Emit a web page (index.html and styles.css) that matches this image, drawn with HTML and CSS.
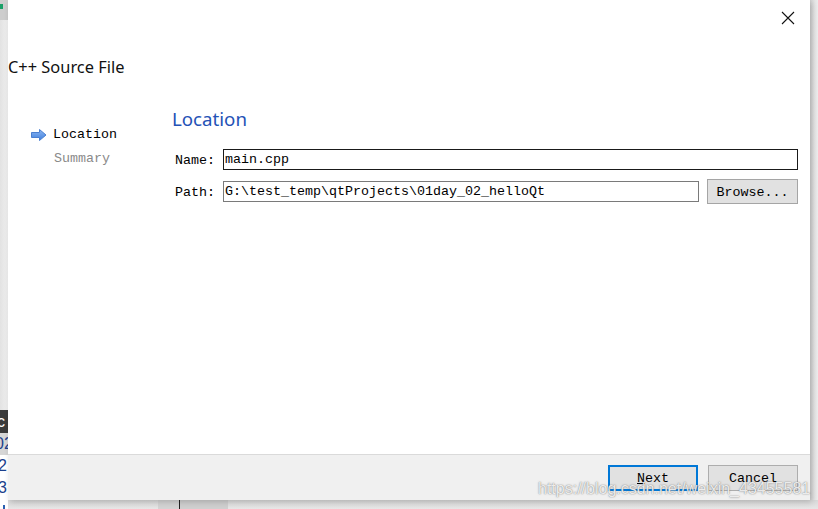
FILE: index.html
```html
<!DOCTYPE html>
<html>
<head>
<meta charset="utf-8">
<link rel="stylesheet" href="styles.css">
</head>
<body>
<div class="screen">
  <div class="left-strip">
    <div class="ls-top"><span class="ls-green"></span></div>
    <div class="ls-light"></div>
    <div class="ls-dark">c</div>
    <div class="ls-grey">02</div>
    <div class="ls-white">2</div>
    <div class="ls-white">3</div>
  </div>
  <div class="dialog">
    <div class="titlebar">
      <svg class="close" width="14" height="14" viewBox="0 0 14 14"><path d="M1 1 L13 13 M13 1 L1 13" stroke="#111" stroke-width="1.1" fill="none"/></svg>
    </div>
    <div class="title">C++ Source File</div>
    <div class="main">
      <div class="nav">
        <div class="nav-item active">
          <svg class="arrow" width="16" height="12" viewBox="0 0 16 12">
            <defs><linearGradient id="g" x1="0" y1="0" x2="0" y2="1"><stop offset="0" stop-color="#8db7f2"/><stop offset="1" stop-color="#3f7fdc"/></linearGradient></defs>
            <path d="M0.5 3.5 H8.5 V0.5 L15 6 L8.5 11.5 V8.5 H0.5 Z" fill="url(#g)" stroke="#4a7fd0" stroke-width="1"/>
          </svg>
          <span>Location</span>
        </div>
        <div class="nav-item pending"><span>Summary</span></div>
      </div>
      <div class="page">
        <div class="heading">Location</div>
        <div class="form">
          <div class="label">Name:</div>
          <div class="field field-name">main.cpp</div>
          <div class="label">Path:</div>
          <div class="path-row">
            <div class="field field-path">G:\test_temp\qtProjects\01day_02_helloQt</div>
            <div class="btn browse">Browse...</div>
          </div>
        </div>
      </div>
    </div>
    <div class="footer">
      <div class="btn footbtn default"><span class="ul">N</span>ext</div>
      <div class="btn footbtn">Cancel</div>
    </div>
  </div>
  <div class="right-strip"></div>
  <div class="bottom-strip">
    <div class="bs-a"><span class="bs-blue"></span></div>
    <div class="bs-b"></div>
    <div class="bs-c"></div>
    <div class="bs-d"></div>
    <div class="bs-e"></div>
  </div>
</div>
<div class="watermark">https://blog.csdn.net/weixin_43455581</div>
</body>
</html>
```
FILE: styles.css
```css
html, body {
  margin: 0;
  padding: 0;
}
body {
  width: 818px;
  height: 509px;
  overflow: hidden;
  background: #e4e4e4;
  position: relative;
  font-family: "Liberation Mono", monospace;
}
.screen {
  display: grid;
  grid-template-columns: 8px 802px 8px;
  grid-template-rows: 500px 9px;
}
.left-strip {
  display: flex;
  flex-direction: column;
  overflow: hidden;
  font-family: "Liberation Sans", sans-serif;
  font-size: 16px;
}
.ls-top {
  height: 20px;
  background: #cdcdcd;
  position: relative;
}
.ls-green {
  position: absolute;
  left: 0;
  top: 4px;
  width: 3px;
  height: 5px;
  background: #1aa068;
}
.ls-light {
  height: 390px;
  background: linear-gradient(90deg, #e2e2e2, #f0f0f0);
}
.ls-dark {
  height: 23px;
  background: #3b3b3b;
  color: #fff;
  line-height: 23px;
  text-indent: -3px;
}
.ls-grey {
  height: 22px;
  background: #d6d6d6;
  color: #1b3f8c;
  line-height: 22px;
  text-indent: -5px;
}
.ls-white {
  height: 22px;
  background: #fff;
  color: #1b3f8c;
  line-height: 22px;
  text-indent: -2px;
}
.ls-white:last-child {
  height: 23px;
}
.dialog {
  background: #fff;
  display: flex;
  flex-direction: column;
  box-shadow: 2px 2px 6px rgba(0,0,0,0.18);
  position: relative;
  z-index: 1;
}
.titlebar {
  height: 36px;
  display: flex;
  justify-content: flex-end;
  align-items: flex-start;
  padding-right: 15px;
}
.close {
  margin-top: 11px;
}
.title {
  font-family: "Noto Sans", "Open Sans", sans-serif;
  font-size: 16.4px;
  line-height: 20px;
  height: 20px;
  margin-top: 21px;
  color: #111;
  padding-left: 0;
}
.main {
  flex: 1;
  display: flex;
  margin-top: 30px;
}
.nav {
  width: 141px;
  padding-left: 23px;
  padding-top: 16px;
  font-size: 13.33px;
}
.nav-item {
  height: 24px;
  line-height: 24px;
  display: flex;
  align-items: center;
}
.nav-item .arrow {
  margin-right: 6px;
}
.nav-item.active {
  color: #000;
}
.nav-item.pending {
  color: #8a8a8a;
  padding-left: 23px;
}
.page {
  flex: 1;
  padding-right: 12px;
}
.heading {
  font-family: "Noto Sans", "Open Sans", sans-serif;
  font-size: 18.7px;
  line-height: 24px;
  color: #2452b6;
  margin-bottom: 18px;
}
.form {
  display: grid;
  grid-template-columns: 51px 1fr;
  row-gap: 9px;
  align-items: center;
  font-size: 13.33px;
  color: #000;
}
.label {
  padding-left: 3px;
  padding-top: 2px;
}
.field {
  height: 19px;
  line-height: 20px;
  padding-left: 1px;
  background: #fff;
  white-space: nowrap;
}
.field-name {
  border: 1px solid #1a1a1a;
}
.path-row {
  display: flex;
  align-items: center;
  gap: 8px;
}
.field-path {
  width: 473px;
  border: 1px solid #7a7a7a;
}
.btn {
  background: #e1e1e1;
  border: 1px solid #adadad;
  box-sizing: border-box;
  display: flex;
  align-items: center;
  justify-content: center;
  font-size: 13.33px;
  color: #000;
  padding-top: 2px;
}
.browse {
  width: 91px;
  height: 25px;
  border-color: #a5a5a5;
}
.footer {
  height: 45px;
  border-top: 1px solid #dadada;
  background: #f0f0f0;
  display: flex;
  justify-content: flex-end;
  align-items: center;
  gap: 10px;
  padding-right: 12px;
}
.footbtn {
  width: 90px;
  height: 26px;
}
.footbtn.default {
  border: 2px solid #0078d7;
}
.ul {
  text-decoration: underline;
}
.right-strip {
  background: linear-gradient(90deg, #d2d2d2, #e6e6e6 60%, #ececec);
}
.bottom-strip {
  grid-column: 1 / 4;
  display: flex;
}
.bs-a {
  width: 8px;
  background: #fff;
  position: relative;
}
.bs-blue {
  position: absolute;
  left: 3px;
  top: 5px;
  width: 2px;
  height: 4px;
  background: #2a5fb0;
}
.bs-b {
  width: 150px;
  background: linear-gradient(180deg, #d9d9d9, #e6e6e6);
}
.bs-c {
  width: 21px;
  background: #d3d3d3;
  border-right: 1px solid #222;
}
.bs-d {
  width: 48px;
  background: #cfcfcf;
}
.bs-e {
  flex: 1;
  background: linear-gradient(180deg, #d9d9d9, #e6e6e6);
}
.watermark {
  position: absolute;
  left: 538px;
  top: 480px;
  font-family: "Liberation Sans", sans-serif;
  font-size: 16px;
  color: rgba(255,255,255,0.85);
  text-shadow: 0 0 1px rgba(90,90,90,0.7), 0 0 2px rgba(120,120,120,0.5);
  white-space: nowrap;
  z-index: 2;
}
```
